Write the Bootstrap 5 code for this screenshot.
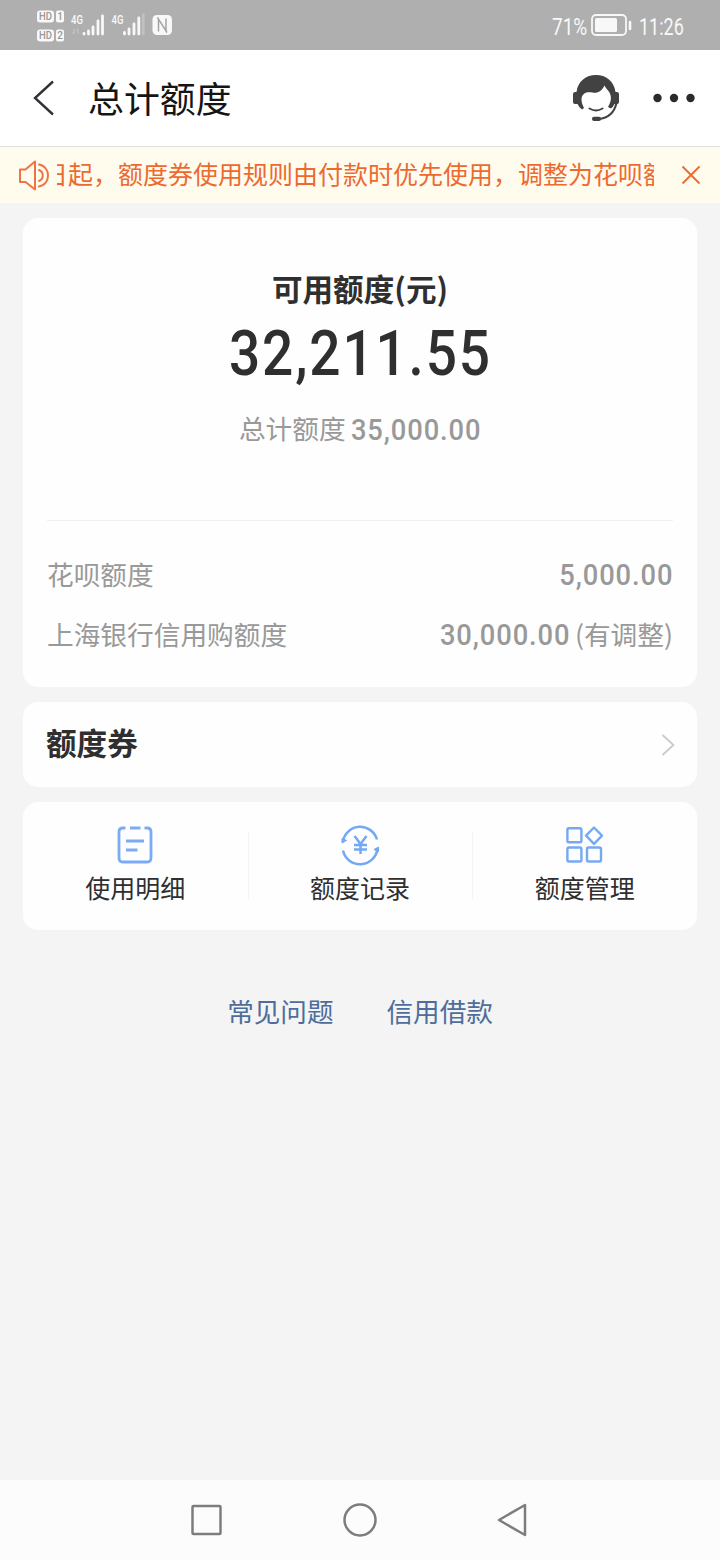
<!DOCTYPE html>
<html lang="zh-CN">
<head>
<meta charset="utf-8">
<meta name="viewport" content="width=device-width, initial-scale=1">
<title>总计额度</title>
<link href="https://cdn.jsdelivr.net/npm/bootstrap@5.3.0/dist/css/bootstrap.min.css" rel="stylesheet">
<style>
body{width:720px;height:1560px;background:#f4f4f4;color:#2f2f2f;font-family:"Noto Sans CJK SC",sans-serif;overflow:hidden;letter-spacing:0}
svg{display:block;flex:none}
.status{height:50px;background:#afafaf;color:#f8f8f8;padding:0 37px 0 36px;font-family:Roboto,"Noto Sans CJK SC",sans-serif}
.stat-text{font-size:24px;line-height:50px;padding-top:4px}
.pct{width:36px}.clock{width:44px}
.squeeze{display:inline-block;transform:scaleX(.75);transform-origin:left center;white-space:nowrap}
.pct .squeeze{transform:scaleX(.79)}
.titlebar{height:97px;background:#fff;border-bottom:1px solid #e2e0dc;padding:0 24px 0 32px}
.page-title{font-size:35.9px;line-height:48px;color:#151515;font-weight:400;margin:-3px 0 0 32px}
.notice{height:56px;background:#fffcee;color:#ec6a30;padding:0 19px 0 18px}
.ticker{width:597px;height:54px;line-height:51px;font-size:25px;overflow:hidden;white-space:nowrap}
.ticker span{display:inline-block;margin-left:-14px}
.panel{background:#fefefe;border-radius:15px}
.summary{height:469px;padding:0 24px}
.cap{font-size:30.6px;line-height:40px;font-weight:700;padding-top:50px}
.num{font-family:Roboto,"Noto Sans CJK SC",sans-serif;font-weight:500;display:inline-block}
.amount{font-size:62.5px;line-height:70px;height:70px;margin-top:5px}
.amount .num{transform:scaleX(.88);letter-spacing:2.1px;white-space:nowrap}
.grey{color:#999;font-size:26.7px;line-height:40px}
.small-num{font-size:30px;line-height:40px;letter-spacing:1px;transform:scaleX(.91);transform-origin:right center;font-weight:500}
.total{margin-top:26px;height:72px}
.line-item{height:60px}
.han{position:relative;top:-1.5px}
.rule{height:1px;background:#f0f0f0}
.coupon{height:85px;padding:0 22px 0 23px;font-size:30.6px;font-weight:700}
.actions{height:128px}
.action{font-size:25px;line-height:32px;padding-top:22px}
.action svg{margin-bottom:5px}
.action + .action::before{content:"";position:absolute;left:0;top:30px;height:67px;width:1px;background:#f3f3f3}
.links{gap:53px;margin-top:61px;font-size:26.6px;line-height:40px}
.links a{color:#4e6d9c;text-decoration:none}
.navkeys{height:80px;background:#fcfcfc}
</style>
</head>
<body class="d-flex flex-column">
<header>
<div class="status d-flex align-items-center justify-content-between">
<svg width="140" height="50" viewBox="36 0 140 50" fill="#f8f8f8" font-family="Roboto,sans-serif" font-weight="700">
<rect x="37" y="10.500" width="17" height="12" rx="3"/><rect x="56" y="10.500" width="8" height="12" rx="2"/>
<rect x="37" y="29.500" width="17" height="12" rx="3"/><rect x="56" y="29.500" width="8" height="12" rx="2"/>
<g fill="#999" font-size="10" font-weight="500"><text x="39" y="20" textLength="13" lengthAdjust="spacingAndGlyphs">HD</text><text x="57.200" y="20">1</text><text x="39" y="39" textLength="13" lengthAdjust="spacingAndGlyphs">HD</text><text x="57.200" y="39">2</text></g>
<g font-size="13" font-weight="500"><text x="71" y="23.500" textLength="12" lengthAdjust="spacingAndGlyphs">4G</text><text x="111.500" y="23.500" textLength="12" lengthAdjust="spacingAndGlyphs">4G</text></g>
<g stroke="#f8f8f8" stroke-width="2.800" stroke-linecap="round"><path d="M84 34v-.5M88.500 34v-3M93 34V27M98 34V21M102.500 34V16M124.500 34v-1.500M129 34v-5M134 34V24M138.800 34V18"/><path d="M143.300 34V15" opacity=".25"/></g>
<path d="M74 29v5m-1.500-2 1.500 2M78 34v-5m-1.500 2 1.500-2" stroke="#c8c8c8" fill="none"/>
<rect x="152.500" y="15" width="19.500" height="20" rx="4.500"/>
<path d="M158.500 31.500V19L166 31V18.500M158.500 19l-1-1.500M166 31l1 1.500" fill="none" stroke="#a3a3a3" stroke-width="1.500"/>
</svg>
<div class="d-flex align-items-center stat-text">
<div class="pct"><span class="squeeze">71%</span></div>
<svg style="margin:-4px 6px 0 3px" width="42" height="24" viewBox="0 0 42 24" fill="none" stroke="#f8f8f8"><rect x="1" y="2" width="34" height="20" rx="4" stroke-width="1.800"/><rect x="4" y="5" width="22" height="14" rx="1.500" fill="#f8f8f8" stroke="none"/><path d="M39 9v7" stroke-width="2.600" stroke-linecap="round"/></svg>
<div class="clock"><span class="squeeze">11:26</span></div>
</div>
</div>
<div class="titlebar d-flex align-items-center">
<svg width="24" height="36" viewBox="0 0 24 36" fill="none" stroke="#303238" stroke-width="2.400"><path d="M21 1.500 3 18l18 16.500"/></svg>
<h1 class="page-title">总计额度</h1>
<svg class="ms-auto" width="50" height="50" viewBox="571 73 50 50" fill="#424242"><path d="M576.500 92C578 81 586 75 596 75s18 6 19.500 17h1.500q2 0 2 2v8q0 2-2 2h-2.500q-1.500 3-3.500 4.500l-3-1.500q4-7 2.500-12c-1-4-4.500-6-6-9.500-3 6-7 8-12 7-5-1-10.500 0-11 6.500 0 3 .5 5 2.500 9l-2 1.500q-3-2-4.500-5.500H575q-2 0-2-2v-8q0-2 2-2Z"/><path d="M589.500 108.500q6.500 4 13 0M616.500 103c-2 9-8 15-18 16" fill="none" stroke="#424242" stroke-width="2" stroke-linecap="round"/><rect x="592" y="116.800" width="9" height="4.200" rx="2"/></svg>
<svg style="margin-left:31px" width="44" height="10" viewBox="0 0 44 10" fill="#2b2b2b"><circle cx="5.500" cy="5" r="4.200"/><circle cx="22" cy="5" r="4.200"/><circle cx="38.500" cy="5" r="4.200"/></svg>
</div>
</header>
<div class="notice d-flex align-items-center">
<svg width="39" height="34" viewBox="18 158 39 34" fill="none" stroke="#eb7545" stroke-width="2" stroke-linejoin="round" stroke-linecap="round"><path d="M20 169.500h5.500l9.500-8v28l-9.500-7.500H20ZM39 164.500c12 2 12 20 0 22M39 170c5 2 5 9 0 11"/></svg>
<div class="ticker"><span>日起，额度券使用规则由付款时优先使用，调整为花呗额度</span></div>
<svg class="ms-auto" width="20" height="20" viewBox="0 0 20 20" stroke="#ed6c36" stroke-width="2"><path d="m1.500 1.500 17 17M18.500 1.500l-17 17"/></svg>
</div>
<main class="flex-grow-1 d-flex flex-column" style="padding:15px 23px 0">
<section class="panel summary">
<div class="cap text-center">可用额度(元)</div>
<div class="amount text-center"><span class="num">32,211.55</span></div>
<div class="total grey text-center text-nowrap"><span class="han">总计额度</span><span class="num small-num" style="margin-left:-8px">35,000.00</span></div>
<div class="rule" style="margin-top:39px;margin-bottom:24px"></div>
<div class="line-item grey d-flex align-items-center justify-content-between"><span class="han">花呗额度</span><span class="num small-num">5,000.00</span></div>
<div class="line-item grey d-flex align-items-center"><span class="han">上海银行信用购额度</span><span class="num small-num ms-auto">30,000.00</span><span class="han ms-1">(有调整)</span></div>
</section>
<section class="panel coupon d-flex align-items-center justify-content-between" style="margin-top:15px"><span class="han">额度券</span>
<svg width="14" height="22" viewBox="0 0 14 22" fill="none" stroke="#c9c9c9" stroke-width="1.700"><path d="m1.500 1 11 10-11 10"/></svg></section>
<nav class="panel actions row g-0 text-center" style="margin-top:15px">
<div class="col action position-relative"><svg class="mx-auto" width="42" height="42" viewBox="114 824 42 42" fill="none" stroke="#7babf5" stroke-width="2.800"><path d="M125.500 828h-2.500q-4 0-4 4v26q0 4 4 4h24q4 0 4-4v-26q0-4-4-4h-2.500M130 828h10.500M126 841h18M126 850h11.500"/></svg>使用明细</div>
<div class="col action position-relative"><svg class="mx-auto" width="42" height="42" viewBox="339 824 42 42" fill="none" stroke="#73a8f4" stroke-width="2.500"><path d="M343 841A17.500 17.500 0 0 1 377 839.500M377.500 848.500A17.500 17.500 0 0 1 343 850.500"/><path d="M342 838.500v4.500l4.500-2.500ZM378.500 851.500V847l-4.500 2.500Z" fill="#73a8f4" stroke-width="1"/><path d="m354.500 836 6 8 6-8M360.500 844v10M354 845h13M354 849.500h13"/></svg>额度记录</div>
<div class="col action position-relative"><svg class="mx-auto" width="42" height="42" viewBox="564 824 42 42" fill="none" stroke="#76a9f3" stroke-width="2.400" stroke-linejoin="round"><rect x="567.400" y="828.200" width="14" height="14" rx="1.500"/><rect x="567.400" y="847.500" width="14" height="14" rx="1.500"/><rect x="587" y="847.500" width="14" height="14" rx="1.500"/><path d="m594 827.500 8 8.200-8 8.200-8-8.200Z"/></svg>额度管理</div>
</nav>
<div class="links d-flex justify-content-center"><a href="#">常见问题</a><a href="#">信用借款</a></div>
</main>
<footer class="navkeys">
<svg width="720" height="80" viewBox="0 1480 720 80" fill="none" stroke="#7d7d7d" stroke-width="2.500" stroke-linejoin="round"><rect x="192.500" y="1506" width="28" height="28" rx="1"/><circle cx="360" cy="1520" r="15.500"/><path d="M525 1505v30l-26-15Z"/></svg>
</footer>
<script src="https://cdn.jsdelivr.net/npm/bootstrap@5.3.0/dist/js/bootstrap.bundle.min.js"></script>
</body>
</html>
